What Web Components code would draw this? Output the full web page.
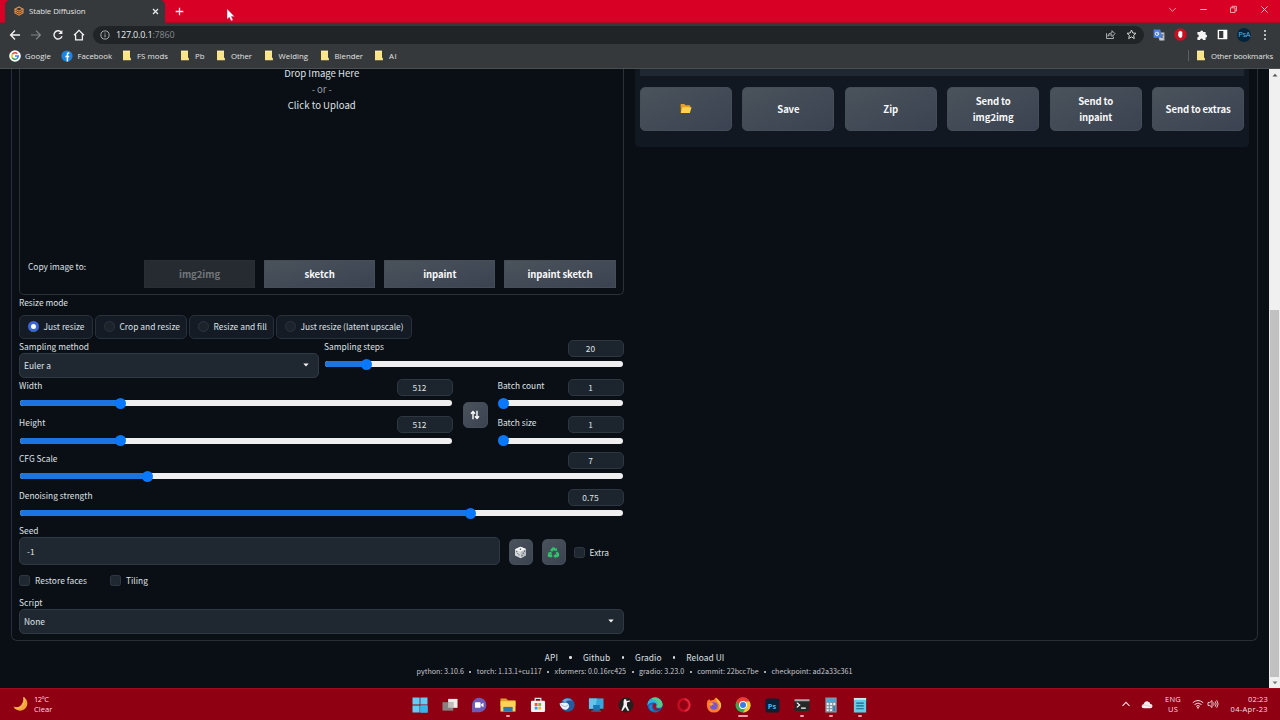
<!DOCTYPE html>
<html lang="en">
<head>
<meta charset="utf-8">
<title>Stable Diffusion</title>
<style>
    body { margin: 0; width: 1280px; height: 720px; overflow: hidden; background: #0a0e15 }
</style>
</head>
<body>
<browser-window></browser-window>
<script>
// FUNCTION define an element; render(element) returns its shadow markup
const define = (name, css, render, connected) =>
    customElements.define(name, class extends HTMLElement {
        connectedCallback() {
            if (this.shadowRoot) return
            this.attachShadow({ mode: "open" })
                .innerHTML = `<style>*{box-sizing:border-box}${css}</style>` + render(this)
            connected && connected(this)
        }
    })
const attr = (el, name, def = "") => el.getAttribute(name) ?? def
const svg = (w, h, body, box = `0 0 ${w} ${h}`) =>
    `<svg width="${w}" height="${h}" viewBox="${box}" fill="none" style="display:block;flex:none">${body}</svg>`

const ICONS = {
    gradio: svg(10, 10, `<g stroke="#e5914a" stroke-width="1.1"><path d="M5 .9 9 3 5 5.2 1 3Z"/><path d="M1 3v4l4 2.2L9 7V3M1 5l4 2.2L9 5"/></g>`),
    back: svg(12, 12, `<path d="M11 6H2M6 1.6 1.6 6 6 10.4" stroke="#f1f1f1" stroke-width="1.4"/>`),
    forward: svg(12, 12, `<path d="M1 6h9M6 1.6 10.4 6 6 10.4" stroke="#85888b" stroke-width="1.2"/>`),
    reload: svg(12, 12, `<path d="M10 7.2A4.1 4.1 0 1 1 9 3" stroke="#f1f1f1" stroke-width="1.4"/><path d="M10.4 1v4H6.4Z" fill="#f1f1f1"/>`),
    home: svg(12, 12, `<path d="M1 6.3 6 1.4l5 4.9M2.6 5.4v5.4h6.8V5.4" stroke="#f1f1f1" stroke-width="1.3"/>`),
    info: svg(10, 10, `<circle cx="5" cy="5" r="4.1" stroke="#a9acaf"/><path d="M5 4.4V7.3M5 2.6v1" stroke="#a9acaf"/>`),
    google: svg(12, 12, `<circle cx="6" cy="6" r="5.8" fill="#fff"/><g stroke-width="1.6"><path d="M3.3 4.4A3.2 3.2 0 0 1 8.3 3.7" stroke="#ea4335"/><path d="M3.3 4.3a3.3 3.3 0 0 0 0 3.4" stroke="#fbbc05"/><path d="M3.2 7.6a3.2 3.2 0 0 0 4.8.9" stroke="#34a853"/><path d="M6 6h3.2q0 1.7-1.2 2.6" stroke="#4285f4"/></g>`),
    facebook: svg(12, 12, `<circle cx="6" cy="6" r="5.6" fill="#1b84e4"/><path d="M8.3 3H7.5Q6.4 3 6.4 4.2V11.4M4.4 6.6h3.8" stroke="#fff" stroke-width="1.5"/>`),
    folder: svg(10, 11, `<path d="M1 .8h7v6.8l.9.6v2H1Z" fill="#fae48a"/><path d="M1 .8h7v1H1Z" fill="#fdf0b4"/>`),
    share: svg(11, 11, `<path d="M1.5 4.2v5.3h7V7.8M2.8 7.2Q3.3 3.8 7 3.8V1.7l3 3-3 3V5.7Q4.4 5.6 2.8 7.2Z" stroke="#b9bbbd" stroke-width=".9"/>`),
    star: svg(11, 11, `<path d="m5.5 1 1.3 3 3.2.3L7.6 6.4l.7 3.2-2.8-1.7-2.8 1.7.7-3.2L1 4.3 4.2 4Z" stroke="#d3d4d5"/>`),
    translate: svg(12, 12, `<path d="M4 3.4h7.4v8H6.5Z" fill="#c7cbd0"/><path d="M.6.6h6.6l2.3 8.2H.6Z" fill="#4b7fe0"/><circle cx="4" cy="4.8" r="1.7" stroke="#e6eefc"/><path d="M4 4.8h2" stroke="#e6eefc" stroke-width=".8"/><path d="M8.300 6h2.600M9.700 5v1q-.4 2-1.400 3M8.800 7.400l1.700 2" stroke="#5d656e" stroke-width=".7"/>`),
    adblock: svg(13, 13, `<path d="M4 .6h5L12.4 4v5L9 12.4H4L.6 9V4Z" fill="#c90f20"/><path d="M4.4 6V4q.5-.6.9 0V3.2q.5-.7 1 0 .5-.7 1 0v.6q.6-.5 1 0V8Q7.8 10 6.4 10 5 10 4 7.3Z" fill="#fff"/>`),
    puzzle: svg(12, 12, `<path d="M1.4 3h2.8a1.5 1.5 0 0 1 3 0h2.4v2.5a1.5 1.5 0 0 1 0 3V11H7a1.5 1.5 0 0 0-3 0H1.4V8.3a1.4 1.4 0 0 0 0-2.8Z" fill="#f4f4f4"/>`),
    panel: svg(11, 11, `<path d="M1.4 1.4h8.2v8.2H1.4Z" stroke="#fff" stroke-width="1.4"/><path d="M6.3 1.4h3.3v8.2H6.3Z" fill="#fff"/>`),
    more: svg(4, 12, `<g fill="#e8e8e8"><circle cx="2" cy="2.1" r="1"/><circle cx="2" cy="6" r="1"/><circle cx="2" cy="9.9" r="1"/></g>`),
    openFolder: svg(12, 11, `<path d="M.8 1h3.6l1 1.2h4.8v2H.8Z" fill="#e8a020"/><path d="M.8 1.4V10h8.8V3.5H3Z" fill="#dfa22a"/><path d="M2.6 4.2H11.6L9.8 10H.8Z" fill="#ffd24d"/>`),
    dice: svg(13, 13, `<path d="M6.5.8 12 3v6.2l-5.3 3L1 9.5V3.2Z" fill="#d7dadd"/><path d="M6.6 5.6 12 3v6.2l-5.3 3Z" fill="#b9bdc2"/><path d="M6.5.8 12 3 6.6 5.6 1 3.2Z" fill="#f5f5f5"/><g fill="#4a4f57"><circle cx="6.4" cy="3.2" r=".8"/><circle cx="2.7" cy="5.7" r=".6"/><circle cx="5" cy="8.8" r=".6"/><circle cx="3.8" cy="7.4" r=".5"/><circle cx="8" cy="9.4" r=".6"/><circle cx="10.6" cy="5.2" r=".6"/><circle cx="9.3" cy="7.2" r=".6"/></g>`),
    recycle: svg(13, 13, `<g stroke="#2fc56b" stroke-width="2.5"><path d="M4.200 5.200 5.600 2.900Q6.400 2 7.300 2.900l.6 1.100M9.600 6.200l1.300 2.200q.4 1.400-1.100 1.600H8.300M5.200 10.100H3q-1.500-.3-.9-1.500l.7-1.300"/></g><path d="m6.600 4.700 3.300.3V1.700ZM8.700 7.800 6.300 10.100l2.400 2.300ZM1 6.500l3.400-.8.500 3.200Z" fill="#2fc56b"/>`),
    swap: svg(10, 10, `<path d="M3 9.3V1.8M1 3.7 3 1.5l2 2.2M7 .7v7.5M5 6.3l2 2.2 2-2.2" stroke="#fff" stroke-width="1.4"/>`),
    moon: svg(16, 16, `<path d="M10.2.8a7.3 7.3 0 1 1-9.7 9.8Q5 12.2 8 9.3 11 6 10.2.8Z" fill="#f5a738"/><path d="M11 1.4Q12.4 7 8.6 10.4 5.6 13 1.6 12" stroke="#fbc25c"/>`),
    windows: svg(18, 18, `<path d="M1 1h7.6v7.6H1ZM9.4 1H17v7.6H9.4ZM1 9.4h7.6V17H1ZM9.4 9.4H17V17H9.4Z" fill="#5fcdf5"/><path d="M9.4 9.4H17V17H9.4Z" fill="#35b4ee"/>`),
    tasks: svg(18, 18, `<path d="M7 2.5h10V12H7Z" fill="#f0eded"/><path d="M1 6h11.5v9H1Z" fill="#88807f"/><path d="M7 6h5.5v6H7Z" fill="#c3bcbb"/>`),
    chat: svg(18, 18, `<path d="M9 1.2a7.8 7.8 0 0 1 0 15.6H1.6V9A7.6 7.6 0 0 1 9 1.2Z" fill="#6e5bb5"/><rect x="4.7" y="6" width="6" height="6" rx="1" fill="#fff"/><path d="m11.3 8.2 2.5-1.7v5l-2.5-1.7Z" fill="#fff"/>`),
    explorer: svg(18, 18, `<path d="M1 2h6l2 2h8v6H1Z" fill="#dba428"/><path d="M1 5h16v11H1Z" fill="#ffd357"/><path d="M4 11h10v5H4Z" fill="#2c79ae"/>`),
    store: svg(18, 18, `<path d="M6 5V2h6v3" stroke="#d4e2ec" stroke-width="1.3"/><rect x="1.5" y="4.5" width="15" height="12" rx="1.4" fill="#f5f3f2"/><path d="M5.5 7h3v3h-3Z" fill="#ef5839"/><path d="M9.3 7h3v3h-3Z" fill="#7cba38"/><path d="M5.5 10.8h3v3h-3Z" fill="#36a1dd"/><path d="M9.3 10.8h3v3h-3Z" fill="#f3b62d"/>`),
    thunderbird: svg(18, 18, `<circle cx="9.8" cy="8.8" r="7.4" fill="#285b9e"/><path d="M4 4.500Q9-.5 15 4.500q-6-1.500-8 2Z" fill="#62aae0"/><path d="M1 7.500 4 6.500l5 .2q2.500 1.500 2.300 4-1 3.300-4 3.300Q2.600 14 1 7.500Z" fill="#eef2f6"/><path d="m2.500 8.500 4.500 2.500 4-2.500" stroke="#9db7cd"/>`),
    remote: svg(18, 18, `<path d="M1.5 2H17v11H1.5Z" fill="#35a7dd"/><path d="M1.5 2H10L8 13H1.5Z" fill="#62c4ec"/><path d="M6 9h7v6H6Z" fill="#1a75b4"/><path d="M4 15.5h10.5" stroke="#207fb9"/>`),
    cs: svg(18, 18, `<circle cx="9" cy="9" r="7.9" fill="#25201f"/><path d="M7 2.8h2.3v2l4-.6v1L10 6.4v3.3l2.5 5.4h-2L8.3 11l-2.8 4H4l2.4-6V5Z" fill="#f2f2f2"/>`),
    edge: svg(18, 18, `<circle cx="9" cy="9" r="8" fill="#1766b4"/><path d="M1 9A8 8 0 0 1 17 8.500Q17.200 12 13 12q-3 0-2.300-1.800Q11.800 6.500 7.800 6 3 5.600 1 9Z" fill="#2fa8de"/><path d="M5 2.100A8 8 0 0 1 17 8.500Q17.200 12 13 12q-3 0-2.300-1.800.8-2.700-1.500-4Q8 3.500 5 2.100Z" fill="#56c98d"/><path d="M1 9.500Q1 4.300 6 3.800q5.500-.2 6 4.200l-1.300 2.200Q11.500 6.600 8 6.200 3.500 5.900 1 9.500Z" fill="#2cb7d8"/><path d="M7.300 7.800q-1.600 1.800-.4 4.300 1.600 2.800 5 2.700 2.500-.1 4-1.800-3 .7-5.200-.6-1.900-1.300.1-3.500-1.100-2-3.500-1.100Z" fill="#a30e25"/><path d="M6.500 8.500Q4.500 12.500 8 15.700q-5-1-5.500-6 1.500-1.700 4-1.200Z" fill="#1c84d0"/>`),
    opera: svg(18, 18, `<ellipse cx="8.700" cy="9" rx="5.600" ry="6.200" stroke="#c80a23" stroke-width="2.400"/><path d="M9.500 2.800q4.800.4 5.700 6.200-.9 5.800-5.300 6.200" stroke="#df2a3c" stroke-width="1.900"/>`),
    firefox: svg(18, 18, `<path d="M2 4.500 4 2.800l1.300 1.800Q7 3.500 8.500 3.800L11 1q.6 2 2.600 3.200Q17 7 16.500 10.500 15.500 17 9 17T1.400 10Q1.200 7 2 4.500Z" fill="#ff7a2d"/><circle cx="8.800" cy="10" r="4" fill="#7858cf"/><path d="M11 1q0 4 3 6.500 2 3-.5 6.500 3.500-2 3-5.500Q16 4.500 11 1Z" fill="#ffc63b"/><path d="M3.500 8q3-2.600 5.500.2-3 .4-3 2Z" fill="#ffa436"/>`),
    chrome: svg(18, 18, `<circle cx="9" cy="9" r="8" fill="#38a852"/><path d="M2 5A8 8 0 0 1 16 5H9L5.500 11Z" fill="#e84133"/><path d="M16.100 5.200A8 8 0 0 1 9 17l3.500-6V5.200Z" fill="#fac633"/><circle cx="9" cy="9" r="4.200" fill="#fff"/><circle cx="9" cy="9" r="3.200" fill="#3b7be2"/>`),
    photoshop: `<span class="ps">Ps</span>`,
    terminal: svg(18, 18, `<path d="M1 3h16v12.500H1Z" fill="#282727"/><path d="M1 3h16v2H1Z" fill="#aaa"/><path d="m3.500 6.500 3 2.500-3 2.500M8 12.300h5" stroke="#fff" stroke-width="1.300"/>`),
    calc: svg(18, 18, `<path d="M3 1h12v16H3Z" fill="#8599a7"/><path d="M4.500 2.500h9v3h-9Z" fill="#3fa8dc"/><path d="M4.500 7h2v2h-2ZM8 7h2v2H8ZM4.500 10.300h2v2h-2ZM8 10.300h2v2H8ZM4.500 13.500h2v2h-2ZM8 13.500h2v2H8ZM11.500 7h2v2h-2Z" fill="#eef5f8"/><path d="M11.500 10.300h2v5.200h-2Z" fill="#2b7eb5"/>`),
    notepad: svg(18, 18, `<path d="M2.500 2h13v15h-13Z" fill="#65cce8"/><path d="M2.500 1.500h13v2h-13Z" fill="#d5e6eb"/><path d="M5 7h8M5 10h8M5 13h8" stroke="#1c6284" stroke-width="1.300"/>`),
    up: svg(10, 8, `<path d="m1.500 5.800 3.500-3.500 3.500 3.500" stroke="#f2d9dc" stroke-width="1.100"/>`),
    cloud: svg(12, 9, `<path d="M3 8.200Q.5 8.200.6 6.200.8 4.400 2.600 4.300 3.600.9 6.700 1.400 8.800 1.800 9.300 4q2.200.1 2.200 2.200-.2 2-2.400 2Z" fill="#f4ecee"/><path d="M1 5.500 4 4.800l6.500 2" stroke="#cfc3c6" stroke-width=".7"/>`),
    wifi: svg(12, 10, `<g stroke="#f3dde0"><path d="M.8 3.700q5.200-4.400 10.400 0M2.500 5.500q3.500-2.900 7 0M4.200 7.300q1.800-1.400 3.600 0"/></g><circle cx="6" cy="8.700" r=".9" fill="#f3dde0"/>`),
    sound: svg(12, 10, `<g stroke="#f3dde0" stroke-width=".9"><path d="M1 3.500h1.800L5 1.500v7l-2.200-2H1Z"/><path d="M6.600 3.500q1 1.500 0 3M8.200 2.300q2 2.700 0 5.400M9.700 1.200q3 3.800 0 7.600"/></g>`),
}

define("ui-icon", `:host{display:flex;flex:none;align-items:center;justify-content:center}
    .ps{display:block;width:15px;height:15px;border-radius:3px;background:#0b1f35;color:#4db2f5;font:bold 8px/15px "Open Sans",sans-serif;text-align:center}`,
    el => ICONS[attr(el, "name")])

// one line of text; "w" is its width in px, reached through letter-spacing
define("ui-text", `:host{display:inline-block;flex:none;white-space:pre}`, _ => `<slot></slot>`,
    el => {
        const w = +attr(el, "w", 0)
        if (w) el.style.letterSpacing = (w - el.getBoundingClientRect().width) / el.textContent.length + "px"
    })

// ---------- browser chrome ----------
define("tab-strip", `:host{display:flex;height:23px;background:#d80024;border-bottom:1px solid #a80d22;align-items:center;position:relative}
    .tab{display:flex;align-items:center;width:160px;height:23px;margin:0 0 -1px 5px;padding:0 6px 1px 9px;background:#35393b;border-radius:5px 5px 0 0;color:#e4e4e4}
    .tab ui-text{margin:0 auto 0 5px}
    .new{margin-left:10px}
    .win{display:flex;margin-left:auto;align-self:flex-start;align-items:center;gap:21.700px;padding-right:11px;height:19px}
    .mouse{position:absolute;left:226px;top:8px}`,
    _ => `<div class="tab"><ui-icon name="gradio"></ui-icon><ui-text w="56.5">Stable Diffusion</ui-text>
        ${svg(7, 7, `<path d="m1 1 5 5M6 1 1 6" stroke="#eee" stroke-width="1.2"/>`)}</div>
        <div class="new">${svg(9, 9, `<path d="M4.500 .7v7.600M.7 4.500h7.600" stroke="#fbe9ec" stroke-width="1.300"/>`)}</div>
        <div class="win">
        ${svg(9, 9, `<path d="m1.200 3 3.300 3.300L7.800 3" stroke="#f5a7b1"/>`)}
        ${svg(9, 9, `<path d="M1.200 4.500h6.600" stroke="#f8b2bc"/>`)}
        ${svg(9, 9, `<path d="M1.500 2.800H6v4.700H1.500ZM3 2.600V1.300h4.500v4.600H6.200" stroke="#f8b2bc" stroke-width=".9"/>`)}
        ${svg(9, 9, `<path d="m1.400 1.400 6.200 6.200M7.600 1.400 1.400 7.600" stroke="#fbc8cf"/>`)}</div>
        <div class="mouse">${svg(10, 14, `<path d="M1 .8v10.400l2.400-2 1.700 3.700 1.900-.9-1.700-3.600h3.200Z" fill="#fff" stroke="#b25" stroke-width=".4"/>`)}</div>`)

define("address-bar", `:host{display:flex;height:23px;align-items:center;background:#35393b;padding:0 11px 0 9px}
    .nav{display:flex;gap:9.300px;width:84px}
    .url{flex:1;display:flex;align-items:center;height:18px;border-radius:9px;background:#202427;padding:0 7px 0 7px;font-size:9px;color:#85898d;gap:10px}
    .url ui-text{margin:0 auto 0 -4px}
    b{font-weight:400;color:#e9eaeb}
    .ext{display:flex;align-items:center;width:125px;padding-left:8.500px;gap:9.200px}
    .me{width:14px;height:14px;border-radius:50%;background:#06233c;color:#54b5e5;font-size:7.500px;line-height:13px;text-align:center;letter-spacing:-.3px;flex:none}`,
    _ => `<div class="nav">${["back", "forward", "reload", "home"].map(n => `<ui-icon name="${n}"></ui-icon>`).join("")}</div>
        <div class="url"><ui-icon name="info"></ui-icon><ui-text w="58.500"><b>127.0.0.1</b>:7860</ui-text><ui-icon name="share"></ui-icon><ui-icon name="star"></ui-icon></div>
        <div class="ext">${["translate", "adblock", "puzzle", "panel"].map(n => `<ui-icon name="${n}"></ui-icon>`).join("")}
        <div class="me">PsA</div><ui-icon name="more" style="margin-left:3px"></ui-icon></div>`)

const MARKS = [["google", "Google", 26, 52.500], ["facebook", "Facebook", 34.500, 61.500], ["folder", "FS mods", 31, 58], ["folder", "Pb", 9.500, 36],
    ["folder", "Other", 21, 47.500], ["folder", "Welding", 29.500, 56], ["folder", "Blender", 28.500, 54.500], ["folder", "AI", 8, 30]]
define("bookmark-bar", `:host{display:flex;height:23px;align-items:center;background:#35393b;padding:0 7px 3px 8px;border-bottom:1px solid #4a4e51;color:#e2e3e4}
    .mark{display:flex;align-items:center}
    ui-icon{width:13px;margin-right:4px}
    ui-icon[name=folder]{width:10px;margin-right:5px}
    .last{margin-left:auto;border-left:1px solid #5b5f62;padding-left:7px;height:11px}`,
    _ => MARKS.map(([icon, label, w, box]) => `<div class="mark" style="width:${box}px"><ui-icon name="${icon}"></ui-icon><ui-text w="${w}">${label}</ui-text></div>`).join("") +
        `<div class="mark last"><ui-icon name="folder"></ui-icon><ui-text w="62">Other bookmarks</ui-text></div>`)

// ---------- form controls ----------
define("gr-button", `:host{display:flex;align-items:center;justify-content:center;text-align:center;background:linear-gradient(to bottom right,#4a525b,#3b4352);
        border:1px solid #454d58;border-radius:5px;color:#f7f8f9;font-size:9.550px;font-weight:700;line-height:16px}
    :host([square]){border-radius:0}
    :host([disabled]){background:#262b31;border-color:#292e34;color:#71767b}`,
    _ => `<slot></slot>`)

define("gr-radio", `:host{display:flex;align-items:center;height:23.500px;border:1px solid #28303a;border-radius:5px;background:#151b25;padding:0 0 0 7.500px;font-size:8.400px}
    i{width:11px;height:11px;border-radius:50%;border:1px solid #2c343e;background:#1c232b;margin-right:5px;flex:none}
    :host([checked]) i{border:3.500px solid #3a66d8;background:#fff}`,
    _ => `<i></i><slot></slot>`)

define("gr-check", `:host{display:flex;align-items:center;height:11px}
    i{width:11px;height:11px;border-radius:2.500px;border:1px solid #303943;background:#1f2831;margin-right:5px;flex:none}`,
    _ => `<i></i><slot></slot>`)

define("gr-select", `:host{display:flex;align-items:center;justify-content:space-between;height:25px;border:1px solid #303943;border-radius:5px;background:#1f2831;padding:0 9px 0 4px}`,
    _ => `<slot></slot>${svg(6, 4, `<path d="M.3.500h5.400L3 3.500Z" fill="#f4f4f4"/>`)}`)

// attributes: label, lw (label width), value, vw (value width), at (thumb position in px)
define("gr-slider", `:host{display:block;height:27px}
    .head{display:flex;justify-content:space-between;height:17px}
    .label{line-height:13px}
    .num{width:56px;height:17px;border:1px solid #2e3741;border-radius:5px;background:#1c242d;text-align:center;line-height:14px;padding-right:10px}
    .track{display:flex;align-items:center;height:6px;margin:4.500px .500px 0 1px;border-radius:3px;background:#efeff0}
    .fill{height:6px;border-radius:3px 0 0 3px;background:#1c74de}
    .thumb{width:11px;height:11px;border-radius:50%;background:#0a78fb;margin-left:-5.500px}`,
    el => `<div class="head"><ui-text class="label" w="${attr(el, "lw")}">${attr(el, "label")}</ui-text>
        <div class="num"><ui-text w="${attr(el, "vw")}">${attr(el, "value")}</ui-text></div></div>
        <div class="track"><div class="fill" style="width:${attr(el, "at")}px"></div><div class="thumb"></div></div>`)

// ---------- web ui ----------
define("image-panel", `:host{display:flow-root;height:225.500px;border:1px solid #29313b;border-top:0;border-radius:0 0 5px 5px;padding:0 7px 0 8px}
    .drop{height:190.500px;font-size:9.550px;line-height:16px;text-align:center}
    .drop div{height:16px}
    .drop .first{height:12px;line-height:8px}
    .copy{display:flex;gap:9px}
    .copy>ui-text{width:107px;line-height:13px}
    gr-button{flex:1;height:28px}`,
    _ => `<div class="drop"><div class="first"><ui-text w="75">Drop Image Here</ui-text></div><div style="color:#9a9fa5"><ui-text w="20">- or -</ui-text></div><div><ui-text w="68">Click to Upload</ui-text></div></div>
        <div class="copy"><ui-text>Copy image to:</ui-text>
        <gr-button square disabled><ui-text w="41">img2img</ui-text></gr-button><gr-button square><ui-text w="30.500">sketch</ui-text></gr-button>
        <gr-button square><ui-text w="33">inpaint</ui-text></gr-button><gr-button square><ui-text w="65">inpaint sketch</ui-text></gr-button></div>`)

define("settings-form", `:host{display:block;width:604.500px}
    .row{display:flex}
    .label{display:block;width:fit-content;line-height:13px;height:13px}
    .radios{gap:2px;margin:6px 0 1px}
    .size{display:grid;grid-template-columns:433.500px 10px 25px 10px 126px;margin-top:.500px}
    .size gr-button{height:26px;margin-top:23px;grid-column:3;grid-row:1/3}
    .seed{height:28.500px;align-items:flex-end}
    .seed gr-button{width:24px;height:26px;margin-left:9px}
    .input{width:480.500px;height:28.500px;border:1px solid #303943;border-radius:5px;background:#1f2831;padding:0 7px;line-height:26px}`,
    _ => `<image-panel></image-panel>
        <ui-text class="label" style="margin-top:1.500px" w="49">Resize mode</ui-text>
        <div class="row radios">
        <gr-radio checked style="width:74px"><ui-text w="41">Just resize</ui-text></gr-radio>
        <gr-radio style="width:92px"><ui-text w="60.500">Crop and resize</ui-text></gr-radio>
        <gr-radio style="width:85px"><ui-text w="53.500">Resize and fill</ui-text></gr-radio>
        <gr-radio style="width:135.500px"><ui-text w="103">Just resize (latent upscale)</ui-text></gr-radio></div>
        <div class="row" style="gap:5px;height:38.500px"><div style="width:300px"><ui-text class="label" w="70">Sampling method</ui-text><gr-select><ui-text w="27">Euler a</ui-text></gr-select></div>
        <gr-slider style="flex:1" label="Sampling steps" lw="60" value="20" vw="9.500" at="41"></gr-slider></div>
        <div class="size">
        <gr-slider label="Width" lw="23.500" value="512" vw="14" at="100"></gr-slider>
        <gr-button><ui-icon name="swap"></ui-icon></gr-button>
        <gr-slider style="grid-column:5" label="Batch count" lw="47" value="1" vw="4.500" at="4.500"></gr-slider>
        <gr-slider style="margin-top:10.500px" label="Height" lw="26.500" value="512" vw="14" at="100"></gr-slider>
        <gr-slider style="grid-column:5;margin-top:10.500px" label="Batch size" lw="39" value="1" vw="4.500" at="4.500"></gr-slider></div>
        <gr-slider style="margin-top:8.500px" label="CFG Scale" lw="38.500" value="7" vw="4.500" at="127"></gr-slider>
        <gr-slider style="margin-top:10px" label="Denoising strength" lw="73.500" value="0.75" vw="16.500" at="450"></gr-slider>
        <ui-text class="label" style="margin-top:8px" w="19.500">Seed</ui-text>
        <div class="row seed"><div class="input"><ui-text w="7.500">-1</ui-text></div>
        <gr-button><ui-icon name="dice"></ui-icon></gr-button><gr-button><ui-icon name="recycle"></ui-icon></gr-button>
        <gr-check style="margin:0 0 7px 8px"><ui-text w="19.500">Extra</ui-text></gr-check></div>
        <div class="row" style="gap:23px;margin:9.500px 0 10px"><gr-check><ui-text w="52">Restore faces</ui-text></gr-check><gr-check><ui-text w="22">Tiling</ui-text></gr-check></div>
        <ui-text class="label" w="23.500">Script</ui-text>
        <gr-select><ui-text w="21">None</ui-text></gr-select>`)

define("gallery-panel", `:host{display:block;width:614px;height:78px;margin-left:11.500px;background:#111822;border-radius:0 0 4px 4px;padding:0 5px}
    .strip{height:7px;background:#1e2732}
    .buttons{display:grid;grid-template-columns:repeat(6,1fr);gap:10.700px;padding-top:10.500px}
    gr-button{height:44.500px}`,
    _ => `<div class="strip"></div><div class="buttons"><gr-button><ui-icon name="openFolder"></ui-icon></gr-button>
        <gr-button><ui-text w="22">Save</ui-text></gr-button><gr-button><ui-text w="15">Zip</ui-text></gr-button>
        <gr-button><div><ui-text w="35">Send to</ui-text><br><ui-text w="41">img2img</ui-text></div></gr-button>
        <gr-button><div><ui-text w="35">Send to</ui-text><br><ui-text w="33">inpaint</ui-text></div></gr-button>
        <gr-button><ui-text w="65">Send to extras</ui-text></gr-button></div>`)

const VERSIONS = [["python: 3.10.6", 47.500], ["torch: 1.13.1+cu117", 65], ["xformers: 0.0.16rc425", 71.500], ["gradio: 3.23.0", 45.500], ["commit: 22bcc7be", 61.500], ["checkpoint: ad2a33c361", 81]]
define("page-footer", `:host{display:block;padding-top:9.500px}
    div{display:flex;justify-content:center;align-items:center;height:14px}
    .versions{font-size:7.150px;color:#c6c9cc}
    i{width:2.500px;height:2.500px;border-radius:50%;background:#dcdee0;margin:0 11.100px}
    .versions i{width:2px;height:2px;margin:0 5.400px}`,
    _ => `<div>${[["API", 13.500], ["Github", 27.500], ["Gradio", 26.500], ["Reload UI", 38]].map(([t, w]) => `<ui-text w="${w}">${t}</ui-text>`).join("<i></i>")}</div>
        <div class="versions">${VERSIONS.map(([t, w]) => `<ui-text w="${w}">${t}</ui-text>`).join("<i></i>")}</div>`)

define("web-page", `:host{display:flex;height:619px;background:#0a0e15;color:#dfe2e5;font:8.370px/13px "Noto Sans CJK SC","Noto Sans CJK JP",sans-serif;overflow:hidden}
    .main{flex:1}
    .frame{display:flex;align-items:flex-start;box-sizing:border-box;width:1247px;height:572px;margin-left:11px;border:1px solid #272e37;border-top:0;border-radius:0 0 6px 6px;padding:0 7px}
    .bar{width:11px;background:#f0f0f0;display:flex;flex-direction:column;align-items:center;padding:4px 0 3px}
    .thumb{width:9px;height:367px;background:#c1c1c1;margin:auto 0 4px}`,
    _ => `<div class="main"><div class="frame"><settings-form></settings-form><gallery-panel></gallery-panel></div><page-footer></page-footer></div>
        <div class="bar">${svg(6, 4, `<path d="M.5 3.500h5L3 .7Z" fill="#555"/>`)}<div class="thumb"></div>${svg(6, 4, `<path d="M.5.500h5L3 3.300Z" fill="#777"/>`)}</div>`)

// ---------- taskbar ----------
const APPS = ["windows", "tasks", "chat", "explorer", "store", "thunderbird", "remote", "cs", "edge", "opera", "firefox", "chrome", "photoshop", "terminal", "calc", "notepad"]
const RUNNING = { explorer: 4, chrome: 10, terminal: 4, calc: 4, notepad: 4 }
define("task-bar", `:host{display:flex;box-sizing:border-box;height:32px;background:#8f0012;border-top:1px solid #a20a21;color:#f3dfe2;font-size:7.500px;line-height:10.500px;align-items:center}
    .weather{display:flex;align-items:center;width:405.500px;padding:0 0 1px 13px;gap:5px}
    .apps{display:flex;flex:none}
    .app{width:29.350px;height:31px;display:flex;flex-direction:column;align-items:center;padding-top:6.500px;gap:1px}
    .app ui-icon{width:18px;height:18px;transform:scale(.940)}
    .app i{height:2px;border-radius:1px;background:#ef9aa5}
    .tray{display:flex;align-items:center;margin-left:auto;padding:0 12px 1px 0}
    .lines{display:flex;flex-direction:column}`,
    _ => `<div class="weather"><ui-icon name="moon"></ui-icon><div class="lines"><ui-text w="16">12°C</ui-text><ui-text w="18.500">Clear</ui-text></div></div>
        <div class="apps">${APPS.map(n => `<div class="app"><ui-icon name="${n}"></ui-icon>${RUNNING[n] ? `<i style="width:${RUNNING[n]}px"></i>` : ""}</div>`).join("")}</div>
        <div class="tray"><ui-icon name="up"></ui-icon><ui-icon name="cloud" style="margin:0 12px 0 10px"></ui-icon>
        <div class="lines" style="align-items:center;width:16px"><ui-text w="16">ENG</ui-text><ui-text w="10">US</ui-text></div>
        <ui-icon name="wifi" style="margin:0 3px 0 11px"></ui-icon><ui-icon name="sound"></ui-icon>
        <div class="lines" style="align-items:flex-end;width:49px"><ui-text w="20">02:23</ui-text><ui-text w="37.500">04-Apr-23</ui-text></div></div>`)

define("browser-window", `:host{display:block;width:1280px;height:720px;font:7.800px/12px "Open Sans","Noto Sans",sans-serif}`,
    _ => `<tab-strip></tab-strip><address-bar></address-bar><bookmark-bar></bookmark-bar><web-page></web-page><task-bar></task-bar>`)
</script>
</body>
</html>
